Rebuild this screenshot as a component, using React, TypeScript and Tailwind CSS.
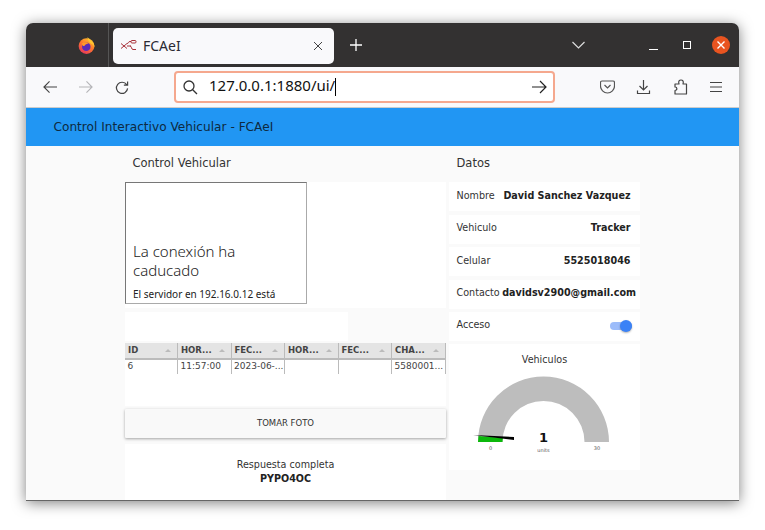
import React from "react";

const sans = "font-['DejaVu_Sans',sans-serif]";
const ui = "font-['Noto_Sans','Open_Sans',sans-serif]";

function Firefox() {
  return (
    <svg width="17" height="17" viewBox="0 0 16 16">
      <defs>
        <linearGradient id="ff" x1="0.8" y1="0" x2="0.2" y2="1">
          <stop offset="0" stopColor="#ffc62f" />
          <stop offset="0.45" stopColor="#ff7a2b" />
          <stop offset="1" stopColor="#e5315f" />
        </linearGradient>
      </defs>
      <circle cx="8" cy="8.500" r="7.400" fill="url(#ff)" />
      <path d="M9 0C11 3 16 4.500 15.500 10 15 7.500 13.500 6.500 12 6 11 5 9 3.500 9 0Z" fill="#ffc62f" />
      <circle cx="7.800" cy="9.200" r="4" fill="#5b2bb8" />
      <path d="M3.500 6C5.500 4.500 8.500 4.500 10 6 8.500 6.200 6.500 7 6 8.500 4.500 8.500 4 7.500 3.500 6Z" fill="#ff9a2b" />
    </svg>
  );
}

function Favicon() {
  return (
    <svg width="16" height="12" viewBox="0 0 16 12" fill="none" stroke="#a8323a" strokeWidth="1">
      <path d="M0 3.500 6 8.500M0 8.500 6 3.500M6 3.500C8 3.500 7 1.500 9 1.500H10M6 6H10M9 6C11 6 10 9.500 12 9.500H15" />
      <rect x="10" y=".5" width="5" height="2.500" rx="1" />
    </svg>
  );
}

function Row({ label, value, tight, up }: { label: string; value: string; tight?: boolean; up?: boolean }) {
  return (
    <div className={`h-[29px] bg-white flex items-center justify-between pl-[7.5px] text-[9.6px] text-[#333] ${tight ? "pr-[4px]" : "pr-[9.5px]"} ${up ? "pb-[2px]" : ""}`}>
      <span>{label}</span>
      <span className="font-bold text-[#222]">{value}</span>
    </div>
  );
}

const cols = [
  { t: "ID", w: "w-[53px]", v: "6" },
  { t: "HOR...", w: "w-[53.5px]", v: "11:57:00" },
  { t: "FEC...", w: "w-[53.5px]", v: "2023-06-..." },
  { t: "HOR...", w: "w-[53.5px]", v: "" },
  { t: "FEC...", w: "w-[53.5px]", v: "" },
  { t: "CHA...", w: "w-[53.5px]", v: "5580001..." },
];

function Table() {
  return (
    <div className="text-[9px] text-[#444] mt-[2px] h-[63px] bg-white">
      <div className="flex h-[17px] bg-[#e4e4e4] border-b-2 border-[#bbb]">
        {cols.map((c, i) => (
          <div key={i} className={`${c.w} shrink-0 flex items-center justify-between pl-[3px] pr-[6px] font-bold text-[8.5px] border-r border-[#bbb] overflow-hidden whitespace-nowrap`}>
            <span>{c.t}</span>
            <span className="w-0 h-0 border-x-[3px] border-x-transparent border-b-[3px] border-b-[#bbb]" />
          </div>
        ))}
      </div>
      <div className="flex h-[14px]">
        {cols.map((c, i) => (
          <div key={i} className={`${c.w} shrink-0 flex items-center pl-[2.5px] border-r border-[#bbb] overflow-hidden whitespace-nowrap`}>
            {c.v}
          </div>
        ))}
      </div>
    </div>
  );
}

function Gauge() {
  return (
    <svg width="191" height="110" viewBox="0 0 191 110" className="block" fontFamily="DejaVu Sans, sans-serif">
      <path d="M29 79A65.500 65.500 0 0 1 160 79H135.500A41 41 0 0 0 53.500 79Z" fill="#bdbdbd" />
      <path d="M29 79 29.500 73 53.800 75 53.500 79Z" fill="#0cb80c" />
      <path d="M24 72 65 74 65 77Z" fill="#000" />
      <text x="41.500" y="87" fontSize="5" textAnchor="middle" fill="#555">0</text>
      <text x="148" y="87" fontSize="5" textAnchor="middle" fill="#555">30</text>
      <text x="94.500" y="79" fontSize="13" fontWeight="bold" textAnchor="middle" fill="#111">1</text>
      <text x="94.500" y="89" fontSize="5" textAnchor="middle" fill="#555">units</text>
    </svg>
  );
}

export default function App() {
  return (
    <div className="w-[765px] h-[530px] bg-white pt-[23px] pl-[26px] overflow-hidden">
      <div className="w-[713px] h-[478px] rounded-t-[7px] overflow-hidden flex flex-col shadow-[0_2px_14px_rgba(0,0,0,0.5)] bg-[#fafafa] border-b border-[#666]">
        {/* Title bar */}
        <div className={`h-[44px] shrink-0 bg-[#333131] flex items-center ${ui}`}>
          <div className="w-[83px] h-full flex items-center justify-end border-r border-[#555]">
            <div className="mr-[13px] mt-[1px]"><Firefox /></div>
          </div>
          <div className="ml-[4px] w-[221px] h-[36px] mt-[1px] bg-[#f9f9fb] rounded-[5px] flex items-center pl-[8px] pr-[11px] text-[#2b2a33] text-[14px]">
            <Favicon />
            <span className="ml-[6px] flex-1">FCAeI</span>
            <svg width="10" height="10" viewBox="0 0 10 10" stroke="#444" strokeWidth="1"><path d="M1 1 9 9M9 1 1 9" /></svg>
          </div>
          <svg className="ml-[15px]" width="14" height="14" viewBox="0 0 14 14" stroke="#fff" strokeWidth="1.300"><path d="M7 1V13M1 7H13" /></svg>
          <div className="flex-1" />
          <svg className="mr-[64px]" width="13" height="8" viewBox="0 0 13 8" fill="none" stroke="#ddd" strokeWidth="1.200"><path d="M.5 1 6.500 7 12.500 1" /></svg>
          <div className="w-[9px] h-px bg-white mt-[8px] mr-[25px]" />
          <div className="w-[8px] h-[8px] border border-white mr-[21px]" />
          <div className="w-[18px] h-[18px] rounded-full bg-[#e95420] flex items-center justify-center mr-[9px]">
            <svg width="8" height="8" viewBox="0 0 8 8" stroke="#fff" strokeWidth="1.400"><path d="M.5 .5 7.500 7.500M7.500 .5 .5 7.500" /></svg>
          </div>
        </div>
        {/* Toolbar */}
        <div className={`h-[41px] shrink-0 bg-[#f9f9fb] border-b border-[#ccc] flex items-center ${ui}`}>
          <svg className="ml-[17px]" width="14" height="14" viewBox="0 0 15 14" fill="none" stroke="#444" strokeWidth="1.200"><path d="M15 7H1M7 1 1 7 7 13" /></svg>
          <svg className="ml-[22px]" width="14" height="14" viewBox="0 0 15 14" fill="none" stroke="#b5b5b8" strokeWidth="1.200"><path d="M0 7H14M8 1 14 7 8 13" /></svg>
          <svg className="ml-[22px]" width="14" height="15" viewBox="0 0 15 15" fill="none" stroke="#444" strokeWidth="1.300"><path d="M12.500 4.500A6 6 0 1 0 13.500 8.500M13.500 1V5H9.500" /></svg>
          <div className="ml-[45px] w-[381px] h-[32px] bg-white rounded-[4px] border-2 border-[#f5a88e] flex items-center pl-[7px] pr-[6px]">
            <svg width="15" height="15" viewBox="0 0 15 15" fill="none" stroke="#333" strokeWidth="1.300"><circle cx="6" cy="6" r="5" /><path d="M9.700 9.700 14 14" /></svg>
            <span className="ml-[11px] text-[15px] text-[#111] flex-1 leading-none">127.0.0.1:1880/ui/<span className="inline-block w-px h-[18px] bg-black align-middle" /></span>
            <svg width="15" height="14" viewBox="0 0 15 14" fill="none" stroke="#222" strokeWidth="1.200"><path d="M0 7H14M8 1 14 7 8 13" /></svg>
          </div>
          <svg className="ml-[45px]" width="15" height="14" viewBox="0 0 15 14" fill="none" stroke="#555" strokeWidth="1.200"><path d="M2 1H13A1.500 1.500 0 0 1 14.500 2.500V6A7 7 0 0 1 .5 6V2.500A1.500 1.500 0 0 1 2 1Z" /><path d="M4.500 5 7.500 8 10.500 5" /></svg>
          <svg className="ml-[21px]" width="15" height="16" viewBox="0 0 15 16" fill="none" stroke="#444" strokeWidth="1.200"><path d="M7.500 1V11M3.500 7 7.500 11 11.500 7M1.500 11.500V14.500H13.500V11.500" /></svg>
          <svg className="ml-[22px]" width="15" height="16" viewBox="0 0 15 16" fill="none" stroke="#444" strokeWidth="1.200" strokeLinejoin="round"><path d="M2 5H6C5 2 6.500 1 8 1S11 2 10 5H13.500V15H2V11.500C4.500 11.500 4.500 8 2 8Z" /></svg>
          <svg className="ml-[21px]" width="14" height="12" viewBox="0 0 14 12" stroke="#444" strokeWidth="1.200"><path d="M1 1.500H13M1 6H13M1 10.500H13" /></svg>
        </div>
        {/* Blue header */}
        <div className={`h-[38px] shrink-0 bg-[#2196f3] flex items-center pl-[27.5px] text-[#0e2a40] ${sans}`}>
          <span className="text-[12.15px]">Control Interactivo Vehicular - FCAeI</span>
        </div>
        {/* Dashboard */}
        <div className={`flex-1 min-h-0 flex overflow-hidden pl-[99px] ${sans}`}>
          <div className="w-[321px] shrink-0">
            <div className="h-[36px] flex items-center pl-[7.5px] text-[11.5px] text-[#333]">Control Vehicular</div>
            <div className="h-[126px] bg-white">
              <div className="w-[182px] h-[122px] border border-[#777] border-r-[#aaa] border-b-[#aaa] px-[7px] pt-[59px] overflow-hidden font-['Noto_Sans',sans-serif] text-[#222]">
                <div className="text-[15px] leading-[19px] font-light">La conexión ha caducado</div>
                <div className="text-[10px] leading-[13px] mt-[8px]">El servidor en 192.16.0.12 está tardando mucho</div>
              </div>
            </div>
            <div className="mt-[4px] w-[223px] h-[29px] bg-white" />
            <Table />
            <div className="h-[3px]" />
            <div className="h-[29px] bg-[#f9f9f9] rounded-[1px] shadow-[0_1px_3px_rgba(0,0,0,0.35)] flex items-center justify-center text-[8.5px] text-[#333]">TOMAR FOTO</div>
            <div className="mt-[6px] h-[70px] bg-white text-center text-[9.6px] text-[#333] pt-[14px] leading-[14px]">
              <div>Respuesta completa</div>
              <div className="font-bold text-[#222]">PYPO4OC</div>
            </div>
          </div>
          <div className="w-[191px] ml-[3px] shrink-0">
            <div className="h-[36px] flex items-center pl-[7.5px] text-[11.5px] text-[#333]">Datos</div>
            <div className="flex flex-col gap-[3.5px]">
              <Row label="Nombre" value="David Sanchez Vazquez" />
              <Row label="Vehiculo" value="Tracker" up />
              <Row label="Celular" value="5525018046" />
              <Row label="Contacto" value="davidsv2900@gmail.com" tight up />
              <div className="h-[29px] bg-white flex items-center justify-between pl-[7.5px] pr-[8.5px] pb-[2px] text-[9.6px] text-[#333]">
                <span>Acceso</span>
                <div className="relative w-[22px] h-[8px] rounded-full bg-[#9cbcfa]">
                  <div className="absolute right-0 top-[-2px] w-[12px] h-[12px] rounded-full bg-[#3b82f6] shadow-[0_1px_2px_rgba(0,0,0,0.3)]" />
                </div>
              </div>
            </div>
            <div className="mt-[3px] h-[126px] bg-white">
              <div className="text-center text-[9.6px] text-[#333] pt-[10px] leading-[12px]">Vehiculos</div>
              <div className="-mt-[3px]"><Gauge /></div>
            </div>
          </div>
        </div>
      </div>
    </div>
  );
}
